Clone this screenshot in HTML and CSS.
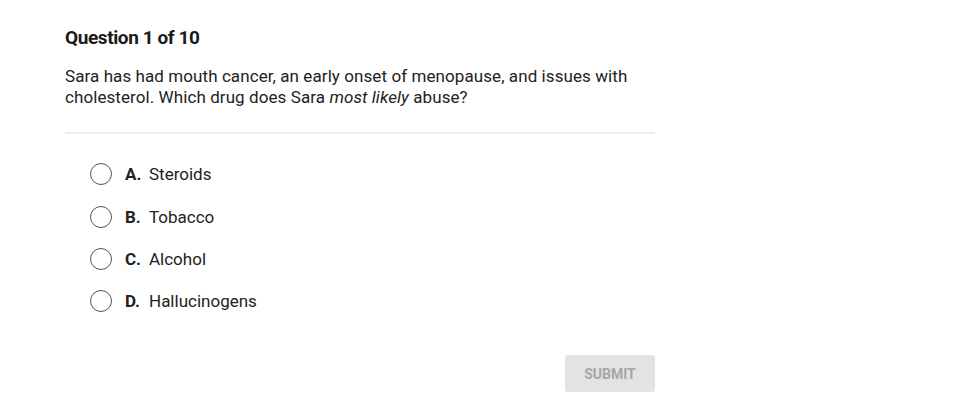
FILE: index.html
```html
<!DOCTYPE html>
<html>
<head>
<meta charset="utf-8">
<link rel="stylesheet" href="styles.css">
</head>
<body>
<div class="quiz">
  <h1 class="title">Question 1 of 10</h1>
  <p class="prompt">Sara has had mouth cancer, an early onset of menopause, and issues with cholesterol. Which drug does Sara <em>most likely</em> abuse?</p>
  <div class="divider"></div>
  <ul class="options">
    <li class="option"><span class="radio"></span><span class="letter">A.</span><span class="text">Steroids</span></li>
    <li class="option"><span class="radio"></span><span class="letter">B.</span><span class="text">Tobacco</span></li>
    <li class="option"><span class="radio"></span><span class="letter">C.</span><span class="text">Alcohol</span></li>
    <li class="option"><span class="radio"></span><span class="letter">D.</span><span class="text">Hallucinogens</span></li>
  </ul>
  <div class="actions"><button class="submit">SUBMIT</button></div>
</div>
</body>
</html>
```
FILE: styles.css
```css
html, body { margin: 0; padding: 0; background: #fff; }
body { font-family: Roboto, "Liberation Sans", sans-serif; color: #222; }
.quiz { width: 590px; margin-left: 65px; padding-top: 26px; }
.title { margin: 0; font-size: 19px; font-weight: 700; line-height: 24px; letter-spacing: -0.4px; color: #1a1a1a; }
.prompt { margin: 16px 0 0; font-size: 17px; line-height: 21px; letter-spacing: 0.08px; color: #222; }
.divider { height: 2px; background: #ececec; margin-top: 24px; }
.options { list-style: none; margin: 29px 0 0; padding: 0 0 0 25px; }
.option { display: flex; align-items: center; height: 22px; margin-bottom: 20px; font-size: 17px; }
.option:first-child { margin-bottom: 21px; }
.radio { width: 22px; height: 22px; border: 1px solid #555; border-radius: 50%; box-sizing: border-box; flex: none; margin-right: 13px; }
.letter { font-weight: 700; width: 24px; color: #222; }
.text { color: #222; }
.actions { display: flex; justify-content: flex-end; margin-top: 43px; }
.submit { width: 90px; height: 37px; border: none; border-radius: 3px; background: #e3e3e3; color: #a6a6a6; font-family: Roboto, "Liberation Sans", sans-serif; font-weight: 700; font-size: 14px; padding: 0; }
```
